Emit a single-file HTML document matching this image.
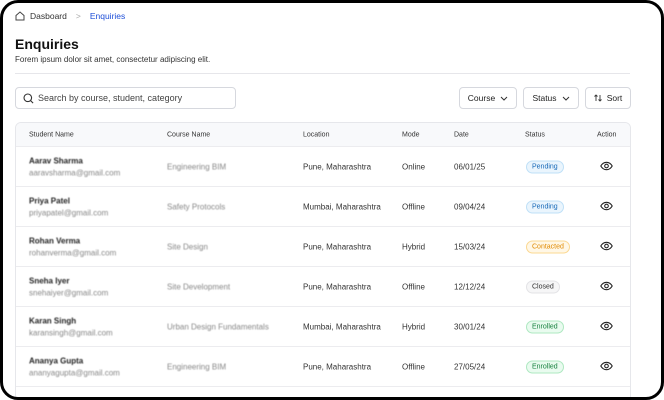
<!DOCTYPE html>
<html><head><style>
*{box-sizing:border-box;margin:0;padding:0}
body{width:664px;height:400px;background:#fff;font-family:"Liberation Sans",sans-serif;overflow:hidden;position:relative}
.frame{position:absolute;left:0;top:0;width:664px;height:400px;border-radius:18px;overflow:hidden;background:#fff}
.ov{position:absolute;left:0;top:0;width:664px;height:400px;border:3px solid #000;border-radius:18px;z-index:10}
.bc{position:absolute;left:15px;top:11px;font-size:8.5px;color:#333;display:flex;align-items:center;gap:5px}
.bc .cur{color:#1d4ed8}
h1{position:absolute;left:15px;top:36px;font-size:14px;font-weight:bold;color:#111}
.sub{position:absolute;left:15px;top:55px;font-size:8px;color:#333}
.hr{position:absolute;left:15px;right:34px;top:73px;border-top:1px solid #e6e6ea}
.search{position:absolute;left:15px;top:87px;width:221px;height:22px;border:1px solid #d6d8de;border-radius:4px;font-size:9px;color:#444;display:flex;align-items:center;padding-left:22px}
.search svg{position:absolute;left:7px;top:5px}
.btn{position:absolute;top:87px;height:22px;border:1px solid #d6d8de;border-radius:4px;font-size:8.5px;color:#222;display:flex;align-items:center;justify-content:center;gap:5px}
.card{position:absolute;left:15px;top:122px;width:616px;height:290px;border:1px solid #e6e7eb;border-radius:6px;overflow:hidden}
.row{position:absolute;left:0;width:614px;height:40px;border-bottom:1px solid #ececef;font-size:8px;color:#333}
.head{top:0;height:24px;background:#f8f9fb;font-size:7px;color:#333}
.row span{position:absolute;top:50%;transform:translateY(-50%);white-space:nowrap}
.nm{filter:blur(0.6px)}
.nm b{display:block;font-size:8px;color:#222;margin-bottom:3px}
.nm i{font-style:normal;color:#888;font-size:8px}
.cn{color:#888;filter:blur(0.5px)}
.pill{font-size:7px;padding:2px 5px;border-radius:8px;border:1px solid}
.p{color:#1769b8;background:#eaf5fd;border-color:#bfe0f7}
.c{color:#e08a00;background:#fff7e6;border-color:#fbd891}
.cl{color:#333;background:#f6f6f7;border-color:#e3e3e6}
.e{color:#15803d;background:#e9fbef;border-color:#aee8c1}
</style></head><body><div class="frame">
<div class="bc"><svg width="10" height="10" viewBox="0 0 10 10"><path d="M1 9V4.5L5 1l4 3.5V9z" fill="none" stroke="#444" stroke-width="1"/><path d="M1 9h8" stroke="#444"/></svg>Dasboard <span style="color:#aaa;margin:0 4px">&gt;</span> <span class="cur">Enquiries</span></div>
<h1>Enquiries</h1>
<div class="sub">Forem ipsum dolor sit amet, consectetur adipiscing elit.</div>
<div class="hr"></div>
<div class="search"><svg width="11" height="11" viewBox="0 0 11 11"><circle cx="4.8" cy="4.8" r="3.8" fill="none" stroke="#333" stroke-width="1.1"/><path d="M7.6 7.6l2.5 2.5" stroke="#333" stroke-width="1.1"/></svg>Search by course, student, category</div>
<div class="btn" style="left:459px;width:58px">Course <svg width="8" height="5" viewBox="0 0 8 5"><path d="M1 1l3 3 3-3" fill="none" stroke="#333"/></svg></div>
<div class="btn" style="left:523px;width:56px">Status <svg width="8" height="5" viewBox="0 0 8 5"><path d="M1 1l3 3 3-3" fill="none" stroke="#333"/></svg></div>
<div class="btn" style="left:585px;width:46px"><svg width="8" height="8" viewBox="0 0 8 8"><path d="M2 7V1M0.5 2.5L2 1l1.5 1.5M6 1v6M4.5 5.5L6 7l1.5-1.5" fill="none" stroke="#333" stroke-width=".9"/></svg>Sort</div>
<div class="card">
<div class="row head"><span style="left:13px">Student Name</span><span style="left:151px">Course Name</span><span style="left:287px">Location</span><span style="left:386px">Mode</span><span style="left:438px">Date</span><span style="left:509px">Status</span><span style="left:581px">Action</span></div>
<div class="row" style="top:24px"><span class="nm" style="left:13px"><b>Aarav Sharma</b><i>aaravsharma@gmail.com</i></span><span class="cn" style="left:151px">Engineering BIM</span><span style="left:287px">Pune, Maharashtra</span><span style="left:386px">Online</span><span style="left:438px">06/01/25</span><span class="pill p" style="left:510px">Pending</span><span style="left:584px"><svg width="13" height="9" viewBox="0 0 13 9"><path d="M.8 4.5C2.5 1.5 4.5.8 6.5.8s4 .7 5.7 3.7C10.5 7.5 8.5 8.2 6.5 8.2S2.5 7.5.8 4.5z" fill="none" stroke="#222" stroke-width="1.1"/><circle cx="6.5" cy="4.5" r="1.8" fill="none" stroke="#222" stroke-width="1.1"/></svg></span></div>
<div class="row" style="top:64px"><span class="nm" style="left:13px"><b>Priya Patel</b><i>priyapatel@gmail.com</i></span><span class="cn" style="left:151px">Safety Protocols</span><span style="left:287px">Mumbai, Maharashtra</span><span style="left:386px">Offline</span><span style="left:438px">09/04/24</span><span class="pill p" style="left:510px">Pending</span><span style="left:584px"><svg width="13" height="9" viewBox="0 0 13 9"><path d="M.8 4.5C2.5 1.5 4.5.8 6.5.8s4 .7 5.7 3.7C10.5 7.5 8.5 8.2 6.5 8.2S2.5 7.5.8 4.5z" fill="none" stroke="#222" stroke-width="1.1"/><circle cx="6.5" cy="4.5" r="1.8" fill="none" stroke="#222" stroke-width="1.1"/></svg></span></div>
<div class="row" style="top:104px"><span class="nm" style="left:13px"><b>Rohan Verma</b><i>rohanverma@gmail.com</i></span><span class="cn" style="left:151px">Site Design</span><span style="left:287px">Pune, Maharashtra</span><span style="left:386px">Hybrid</span><span style="left:438px">15/03/24</span><span class="pill c" style="left:510px">Contacted</span><span style="left:584px"><svg width="13" height="9" viewBox="0 0 13 9"><path d="M.8 4.5C2.5 1.5 4.5.8 6.5.8s4 .7 5.7 3.7C10.5 7.5 8.5 8.2 6.5 8.2S2.5 7.5.8 4.5z" fill="none" stroke="#222" stroke-width="1.1"/><circle cx="6.5" cy="4.5" r="1.8" fill="none" stroke="#222" stroke-width="1.1"/></svg></span></div>
<div class="row" style="top:144px"><span class="nm" style="left:13px"><b>Sneha Iyer</b><i>snehaiyer@gmail.com</i></span><span class="cn" style="left:151px">Site Development</span><span style="left:287px">Pune, Maharashtra</span><span style="left:386px">Offline</span><span style="left:438px">12/12/24</span><span class="pill cl" style="left:510px">Closed</span><span style="left:584px"><svg width="13" height="9" viewBox="0 0 13 9"><path d="M.8 4.5C2.5 1.5 4.5.8 6.5.8s4 .7 5.7 3.7C10.5 7.5 8.5 8.2 6.5 8.2S2.5 7.5.8 4.5z" fill="none" stroke="#222" stroke-width="1.1"/><circle cx="6.5" cy="4.5" r="1.8" fill="none" stroke="#222" stroke-width="1.1"/></svg></span></div>
<div class="row" style="top:184px"><span class="nm" style="left:13px"><b>Karan Singh</b><i>karansingh@gmail.com</i></span><span class="cn" style="left:151px">Urban Design Fundamentals</span><span style="left:287px">Mumbai, Maharashtra</span><span style="left:386px">Hybrid</span><span style="left:438px">30/01/24</span><span class="pill e" style="left:510px">Enrolled</span><span style="left:584px"><svg width="13" height="9" viewBox="0 0 13 9"><path d="M.8 4.5C2.5 1.5 4.5.8 6.5.8s4 .7 5.7 3.7C10.5 7.5 8.5 8.2 6.5 8.2S2.5 7.5.8 4.5z" fill="none" stroke="#222" stroke-width="1.1"/><circle cx="6.5" cy="4.5" r="1.8" fill="none" stroke="#222" stroke-width="1.1"/></svg></span></div>
<div class="row" style="top:224px"><span class="nm" style="left:13px"><b>Ananya Gupta</b><i>ananyagupta@gmail.com</i></span><span class="cn" style="left:151px">Engineering BIM</span><span style="left:287px">Pune, Maharashtra</span><span style="left:386px">Offline</span><span style="left:438px">27/05/24</span><span class="pill e" style="left:510px">Enrolled</span><span style="left:584px"><svg width="13" height="9" viewBox="0 0 13 9"><path d="M.8 4.5C2.5 1.5 4.5.8 6.5.8s4 .7 5.7 3.7C10.5 7.5 8.5 8.2 6.5 8.2S2.5 7.5.8 4.5z" fill="none" stroke="#222" stroke-width="1.1"/><circle cx="6.5" cy="4.5" r="1.8" fill="none" stroke="#222" stroke-width="1.1"/></svg></span></div>
</div>
</div><div class="ov"></div></body></html>
